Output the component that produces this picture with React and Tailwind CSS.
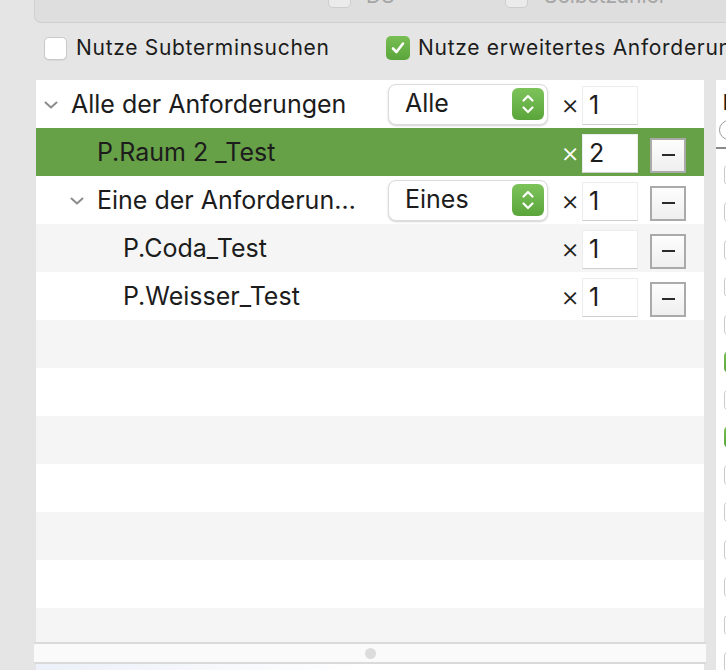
import React from 'react';

const rows = [
  { level: 0, label: 'Alle der Anforderungen', open: true, select: 'Alle', count: '1', remove: false },
  { level: 1, label: 'P.Raum 2 _Test', count: '2', selected: true },
  { level: 1, label: 'Eine der Anforderungen', open: true, select: 'Eines', count: '1' },
  { level: 2, label: 'P.Coda_Test', count: '1' },
  { level: 2, label: 'P.Weisser_Test', count: '1' },
];

const sideChecks = [false, false, false, false, false, true, false, true, false, false, false, false, false, false];

function Chevron() {
  return (
    <svg width="14" height="8" viewBox="0 0 14 8" fill="none">
      <path d="M1.5 1.5 L7 6.5 L12.5 1.5" stroke="#8c8c8c" strokeWidth="2" strokeLinecap="round" strokeLinejoin="round" />
    </svg>
  );
}

function Stepper() {
  return (
    <div className="flex h-[32px] w-[32px] shrink-0 items-center justify-center rounded-[6px] bg-gradient-to-b from-[#7cc35a] to-[#5aa53b]">
      <svg width="14" height="22" viewBox="0 0 14 22" fill="none">
        <path d="M2.5 7.5 L7 3 L11.5 7.5" stroke="white" strokeWidth="2.2" strokeLinecap="round" strokeLinejoin="round" />
        <path d="M2.5 14.5 L7 19 L11.5 14.5" stroke="white" strokeWidth="2.2" strokeLinecap="round" strokeLinejoin="round" />
      </svg>
    </div>
  );
}

function Popup({ value }) {
  return (
    <div className="flex h-[41px] w-[160px] shrink-0 items-center justify-between rounded-[8px] border border-[#dcdcdc] bg-white pl-[16px] pr-[3px] shadow-[0_1px_2px_rgba(0,0,0,0.18)]">
      <span>{value}</span>
      <Stepper />
    </div>
  );
}

function Row({ row, index }) {
  const bg = row.selected ? 'bg-[#66a047]' : index % 2 === 1 ? 'bg-[#f4f5f4]' : 'bg-white';
  const pad = [8, 34, 60][row.level];
  return (
    <div className={`flex h-[48px] shrink-0 items-center ${bg}`}>
      <div className="flex w-[346px] shrink-0 items-center pr-[22px] pt-[2px]" style={{ paddingLeft: pad }}>
        <div className="flex w-[27px] shrink-0 items-center">{row.open && <Chevron />}</div>
        <span className="truncate">{row.label}</span>
      </div>
      <div className="flex w-[179px] shrink-0 items-center pl-[6px]">
        {row.select && <Popup value={row.select} />}
      </div>
      <span className={`w-[21px] shrink-0 text-[28px] font-light leading-none ${row.selected ? 'text-white' : 'text-[#222]'}`}>×</span>
      <div className="mt-[3px] flex h-[39px] w-[56px] shrink-0 items-center border border-[#ececec] border-b-[#cfcfcf] bg-white pl-[6px]">
        {row.count}
      </div>
      {row.remove !== false && (
        <div className="ml-[12px] mt-[6px] flex h-[35px] w-[36px] shrink-0 items-center justify-center border-2 border-[#aaaaaa] bg-gradient-to-b from-[#fdfdfd] to-[#efefef]">
          <div className="h-[2px] w-[13px] bg-[#2a2a2a]" />
        </div>
      )}
    </div>
  );
}

export default function App() {
  const empty = Array.from({ length: 7 });
  return (
    <div className="flex h-[670px] w-[726px] flex-col overflow-hidden bg-[#e5e5e5] font-['Inter',sans-serif] text-[#1c1c1c]">
      <div className="ml-[34px] h-[23px] w-[720px] shrink-0 overflow-hidden rounded-bl-[7px] border border-t-0 border-[#d0d0d0] bg-[#dedede]">
        <div className="-mt-[16px] flex h-[24px] items-center whitespace-nowrap text-[21px] text-[#a6a6a6]">
          <div className="ml-[293px] flex w-[177px] shrink-0 items-center">
            <div className="h-[23px] w-[23px] shrink-0 rounded-[5px] border border-[#cdcdcd] bg-[#ebebeb]" />
            <span className="ml-[15px]">DS</span>
          </div>
          <div className="h-[23px] w-[23px] shrink-0 rounded-[5px] border border-[#cdcdcd] bg-[#ebebeb]" />
          <span className="ml-[16px]">Selbstzahler</span>
        </div>
      </div>

      <div className="mt-[13px] flex h-[24px] shrink-0 items-center whitespace-nowrap text-[21px] tracking-[0.7px]">
        <div className="ml-[44px] flex w-[342px] shrink-0 items-center">
          <div className="h-[23px] w-[23px] shrink-0 rounded-[5px] border border-[#c9c9c9] bg-white shadow-[0_1px_1px_rgba(0,0,0,0.06)]" />
          <span className="ml-[9px]">Nutze Subterminsuchen</span>
        </div>
        <div className="flex h-[24px] w-[24px] shrink-0 items-center justify-center rounded-[5px] bg-gradient-to-b from-[#78bf55] to-[#5aa53b]">
          <svg width="16" height="16" viewBox="0 0 16 16" fill="none">
            <path d="M3 8.5 L6.5 12 L13 3.5" stroke="white" strokeWidth="2.6" strokeLinecap="round" strokeLinejoin="round" />
          </svg>
        </div>
        <span className="ml-[8px]">Nutze erweitertes Anforderungsmodell</span>
      </div>

      <div className="mt-[20px] flex min-h-0 flex-1 pl-[36px]">
        <div className="flex w-[668px] shrink-0 flex-col">
          <div className="flex h-[562px] shrink-0 flex-col overflow-hidden whitespace-nowrap text-[25px]">
            {rows.map((row, i) => (
              <Row key={i} row={row} index={i} />
            ))}
            {empty.map((_, i) => (
              <div key={i} className={`h-[48px] shrink-0 ${(i + rows.length) % 2 === 1 ? 'bg-[#f4f5f4]' : 'bg-white'}`} />
            ))}
          </div>
          <div className="-mx-[2px] flex h-[22px] shrink-0 items-center justify-center border-y-2 border-[#dadada] bg-[#fafafa]">
            <div className="h-[11px] w-[11px] rounded-full bg-[#dcdcdc]" />
          </div>
          <div className="flex-1 bg-gradient-to-r from-[#ecf0f8] via-white to-white" />
        </div>

        <div className="ml-[12px] flex w-[200px] shrink-0 flex-col bg-white">
          <div className="mt-[12px] h-[22px] pl-[7px] text-[21px] font-bold leading-[22px]">Raum</div>
          <div className="ml-[3px] mt-[6px] h-[20px] w-[20px] shrink-0 rounded-full border border-[#9c9c9c]" />
          <div className="mt-[7px] h-[2px] shrink-0 bg-[#8a8a8a]" />
          <div className="mt-[7px] flex flex-col">
            {sideChecks.map((on, i) => (
              <div key={i} className="flex h-[37.5px] shrink-0 items-center pl-[8px]">
                {on ? (
                  <div className="h-[22px] w-[22px] rounded-[5px] bg-gradient-to-b from-[#78bf55] to-[#5aa53b]" />
                ) : (
                  <div className="h-[22px] w-[22px] rounded-[5px] border border-[#c9c9c9] bg-white" />
                )}
              </div>
            ))}
          </div>
        </div>
      </div>
    </div>
  );
}
